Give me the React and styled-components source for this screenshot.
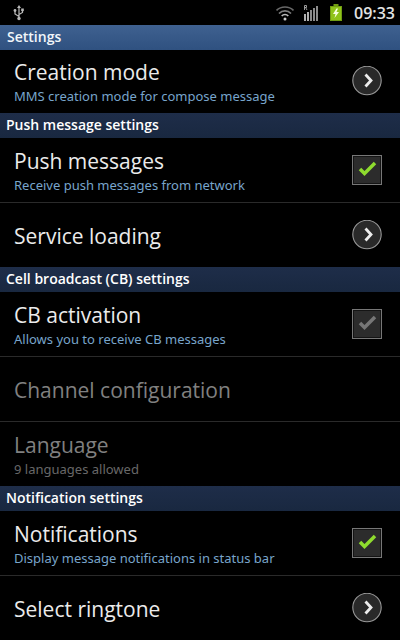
import React, { useState } from "react";
import styled, { createGlobalStyle } from "styled-components";

const GlobalStyle = createGlobalStyle`
  * {
    box-sizing: border-box;
  }

  body {
    margin: 0;
    background: #000;
    font-family: "Open Sans", "Noto Sans", sans-serif;
  }
`;

const Screen = styled.main`
  min-height: 100vh;
  background: #000;
  color: #ebebeb;
  overflow: hidden;
`;

const StatusBar = styled.header`
  display: flex;
  align-items: center;
  justify-content: space-between;
  height: 25px;
  padding: 0 5px 0 12px;
`;

const StatusIcons = styled.div`
  display: flex;
  align-items: center;
  gap: 10px;
`;

const Clock = styled.time`
  margin-left: 2px;
  color: #e2e2e2;
  font-size: 16px;
  font-weight: 600;
  line-height: 24px;
`;

const TitleBar = styled.h1`
  margin: 0;
  padding: 0 7px;
  background: linear-gradient(#3f6190, #2f5180);
  color: #f2f6fa;
  font-size: 14px;
  font-weight: 600;
  line-height: 24px;
  padding-bottom: 1px;
`;

const SettingsList = styled.div`
  margin-top: -1px;
`;

const SectionTitle = styled.h2`
  margin: 0;
  padding: 0 6px 1px;
  background: linear-gradient(#1e2d49, #192840);
  color: #fff;
  font-size: 14px;
  font-weight: 600;
  line-height: 24px;
`;

const Rows = styled.ul`
  margin: 0;
  padding: 0;
  list-style: none;
`;

const RowItem = styled.li`
  & + & {
    border-top: 1px solid #2a2a2a;
  }
`;

const Row = styled.div`
  display: flex;
  align-items: center;
  justify-content: space-between;
  width: 100%;
  min-height: 64px;
  padding: 0 18px 0 14px;
  border: 0;
  background: none;
  color: #ebebeb;
  font-family: inherit;
  text-align: left;
  cursor: pointer;

  &:disabled {
    color: #808080;
    cursor: default;
  }
`;

const RowText = styled.span`
  display: flex;
  flex-direction: column;
  padding-top: 2px;
`;

const RowTitle = styled.span`
  font-size: 21px;
  line-height: 28px;
`;

const RowSummary = styled.span`
  color: ${({ $disabled }) => ($disabled ? "#686868" : "#78a5cb")};
  font-family: "Noto Sans", sans-serif;
  font-size: 13px;
  line-height: 20px;
`;

const CheckFrame = styled.span`
  display: grid;
  flex: none;

  & > * {
    grid-area: 1 / 1;
  }
`;

const CheckInput = styled.input`
  appearance: none;
  width: 30px;
  height: 30px;
  margin: 0;
  border: 1px solid #777;
  background: #2c2c2c;
  box-shadow: inset 0 0 0 1px #141414;
`;

const CheckMark = styled.svg`
  pointer-events: none;
  visibility: ${({ $on }) => ($on ? "visible" : "hidden")};
`;

const ArrowIcon = styled.svg`
  flex: none;
`;

const UsbIcon = () => (
  <svg width="14" height="16" viewBox="0 0 14 16" fill="none" stroke="#b9b9b9" strokeWidth="1.2">
    <path d="M7 2v11M7 11.5L3 9V6M7 9.5L10.500 7.500V5" />
    <path d="M7 0l2 3H5z" fill="#b9b9b9" stroke="none" />
    <circle cx="7" cy="13.500" r="1.700" fill="#b9b9b9" stroke="none" />
    <circle cx="3" cy="5.500" r="1.400" fill="#b9b9b9" stroke="none" />
    <path d="M9.200 3.500h2.600v2.600H9.200z" fill="#b9b9b9" stroke="none" />
  </svg>
);

const WifiIcon = () => (
  <svg width="18" height="16" viewBox="1 0 18 16" fill="none" strokeWidth="1.700">
    <path d="M1.500 5.500C6 .8 14 .8 18.500 5.500" stroke="#686868" />
    <path d="M4 8.500C7.300 5 12.700 5 16 8.500" stroke="#808080" />
    <path d="M6.700 11C8.600 9 11.400 9 13.300 11" stroke="#bbb" />
    <circle cx="10" cy="14" r="1.500" fill="#ccc" />
  </svg>
);

const SignalIcon = () => (
  <svg width="16" height="16" viewBox="0 0 16 16">
    <path d="M.500 5V.500H2.500V2.500H.500M1.500 2.500L3 5" fill="none" stroke="#aaa" strokeWidth="0.900" />
    <path d="M0 9h2v7H0zM3 7h2v9H3z" fill="#b0b0b0" />
    <path d="M6 5h2v11H6zM9 3h2v13H9zM12 1h2v15h-2z" fill="#8c8c8c" />
  </svg>
);

const BatteryIcon = () => (
  <svg width="12" height="17" viewBox="0 0 12 17">
    <path d="M3.500 0h5v2H12v15H0V2h3.500z" fill="#709c12" />
    <path d="M1 3h10v13H1z" fill="#8fc31a" />
    <path d="M6.500 4.500L3 10h2.500L4.500 14 9 8H6.500L8 4.500z" fill="#f6ffe0" />
  </svg>
);

const Arrow = () => (
  <ArrowIcon width="30" height="30" viewBox="0 0 30 30" aria-hidden="true">
    <circle cx="15" cy="14.500" r="14.200" fill="#292929" stroke="#999" strokeWidth="1.100" />
    <path d="M13.500 8.500l5.500 6-5.500 6" fill="none" stroke="#ececec" strokeWidth="2.800" />
  </ArrowIcon>
);

const LinkRow = ({ title, summary, disabled, plain }) => (
  <RowItem>
    <Row as="button" type="button" disabled={disabled}>
      <RowText>
        <RowTitle>{title}</RowTitle>
        {summary && <RowSummary $disabled={disabled}>{summary}</RowSummary>}
      </RowText>
      {!plain && <Arrow />}
    </Row>
  </RowItem>
);

const CheckRow = ({ id, title, summary, dimmed }) => {
  const [checked, setChecked] = useState(true);

  return (
    <RowItem>
      <Row as="label" htmlFor={id}>
        <RowText>
          <RowTitle>{title}</RowTitle>
          <RowSummary>{summary}</RowSummary>
        </RowText>
        <CheckFrame>
          <CheckInput
            id={id}
            type="checkbox"
            checked={checked}
            disabled={dimmed}
            onChange={() => setChecked(!checked)}
          />
          <CheckMark $on={checked} width="30" height="30" viewBox="0 0 30 30" aria-hidden="true">
            <path
              d="M8 14l4.500 4.500L23 8"
              fill="none"
              stroke={dimmed ? "#777" : "#8edb2e"}
              strokeWidth="3.500"
            />
          </CheckMark>
        </CheckFrame>
      </Row>
    </RowItem>
  );
};

const App = () => {
  return (
    <>
      <GlobalStyle />
      <Screen>
        <StatusBar>
          <UsbIcon />
          <StatusIcons>
            <WifiIcon />
            <SignalIcon />
            <BatteryIcon />
            <Clock>09:33</Clock>
          </StatusIcons>
        </StatusBar>
        <TitleBar>Settings</TitleBar>
        <SettingsList>
          <Rows>
            <LinkRow title="Creation mode" summary="MMS creation mode for compose message" />
          </Rows>
          <SectionTitle>Push message settings</SectionTitle>
          <Rows>
            <CheckRow id="push" title="Push messages" summary="Receive push messages from network" />
            <LinkRow title="Service loading" />
          </Rows>
          <SectionTitle>Cell broadcast (CB) settings</SectionTitle>
          <Rows>
            <CheckRow id="cb" title="CB activation" summary="Allows you to receive CB messages" dimmed />
            <LinkRow title="Channel configuration" disabled plain />
            <LinkRow title="Language" summary="9 languages allowed" disabled plain />
          </Rows>
          <SectionTitle>Notification settings</SectionTitle>
          <Rows>
            <CheckRow
              id="notifications"
              title="Notifications"
              summary="Display message notifications in status bar"
            />
            <LinkRow title="Select ringtone" />
          </Rows>
        </SettingsList>
      </Screen>
    </>
  );
};

export default App;
